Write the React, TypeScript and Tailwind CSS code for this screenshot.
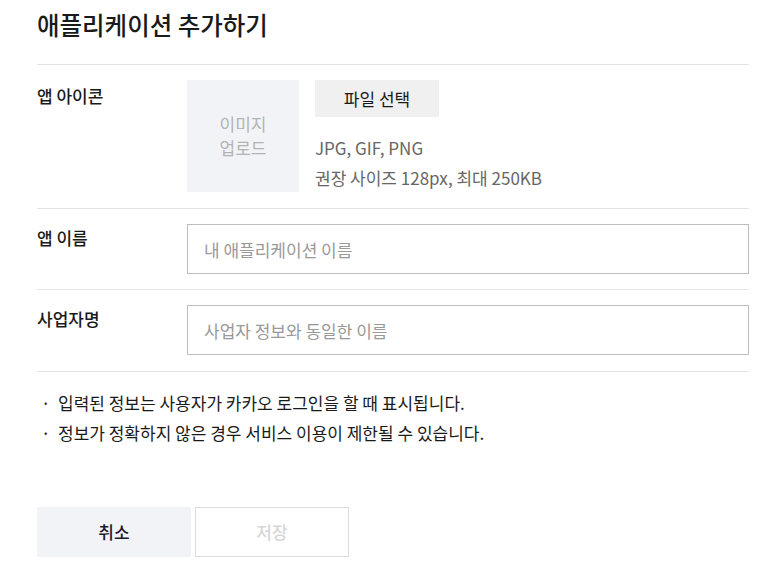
export default function App() {
  return (
    <div
      className="min-h-screen bg-white px-[37px] pt-[8px] text-[#1a1a1a]"
      style={{ fontFamily: '"Noto Sans CJK KR", "Noto Sans", sans-serif' }}
    >
      <div className="w-[712px]">
        <h1 className="text-[24.5px] leading-[34px] font-medium pb-[22px] border-b border-[#e5e5e5]">
          애플리케이션 추가하기
        </h1>

        {/* App icon */}
        <div className="flex border-b border-[#e5e5e5] pt-[15px] pb-[15px]">
          <div className="w-[150px] text-[17px] font-medium leading-[32px]">앱 아이콘</div>
          <div className="flex">
            <div className="w-[112px] h-[112px] bg-[#f2f3f7] flex items-center justify-center text-center text-[17px] leading-[24px] text-[#b3b3b3]">
              이미지
              <br />
              업로드
            </div>
            <div className="ml-[16px]">
              <button className="w-[124px] h-[37px] bg-[#f0f0f0] text-[17px] text-[#1a1a1a]">
                파일 선택
              </button>
              <div className="mt-[16px] text-[17px] leading-[30px] text-[#666]">
                <p>JPG, GIF, PNG</p>
                <p>권장 사이즈 128px, 최대 250KB</p>
              </div>
            </div>
          </div>
        </div>

        {/* App name */}
        <div className="flex border-b border-[#e5e5e5] pt-[15px] pb-[15px]">
          <div className="w-[150px] text-[17px] font-medium leading-[28px]">앱 이름</div>
          <input
            className="flex-1 h-[50px] border border-[#bdbdbd] px-[16px] text-[17px] outline-none placeholder:text-[#999]"
            placeholder="내 애플리케이션 이름"
          />
        </div>

        {/* Business name */}
        <div className="flex border-b border-[#e5e5e5] pt-[15px] pb-[16px]">
          <div className="w-[150px] text-[17px] font-medium leading-[28px]">사업자명</div>
          <input
            className="flex-1 h-[50px] border border-[#bdbdbd] px-[16px] text-[17px] outline-none placeholder:text-[#999]"
            placeholder="사업자 정보와 동일한 이름"
          />
        </div>

        <ul className="pt-[16px] text-[17px] leading-[30px] text-[#1a1a1a]">
          <li className="flex">
            <span className="w-[21px] pl-[4px]">·</span>
            입력된 정보는 사용자가 카카오 로그인을 할 때 표시됩니다.
          </li>
          <li className="flex">
            <span className="w-[21px] pl-[4px]">·</span>
            정보가 정확하지 않은 경우 서비스 이용이 제한될 수 있습니다.
          </li>
        </ul>

        <div className="flex gap-[4px] mt-[59px]">
          <button className="w-[154px] h-[50px] bg-[#f2f3f7] text-[17px] font-medium text-[#1a1a2e]">
            취소
          </button>
          <button className="w-[154px] h-[50px] border border-[#dcdcdc] bg-white text-[17px] font-medium text-[#d6d6d6]">
            저장
          </button>
        </div>
      </div>
    </div>
  );
}
